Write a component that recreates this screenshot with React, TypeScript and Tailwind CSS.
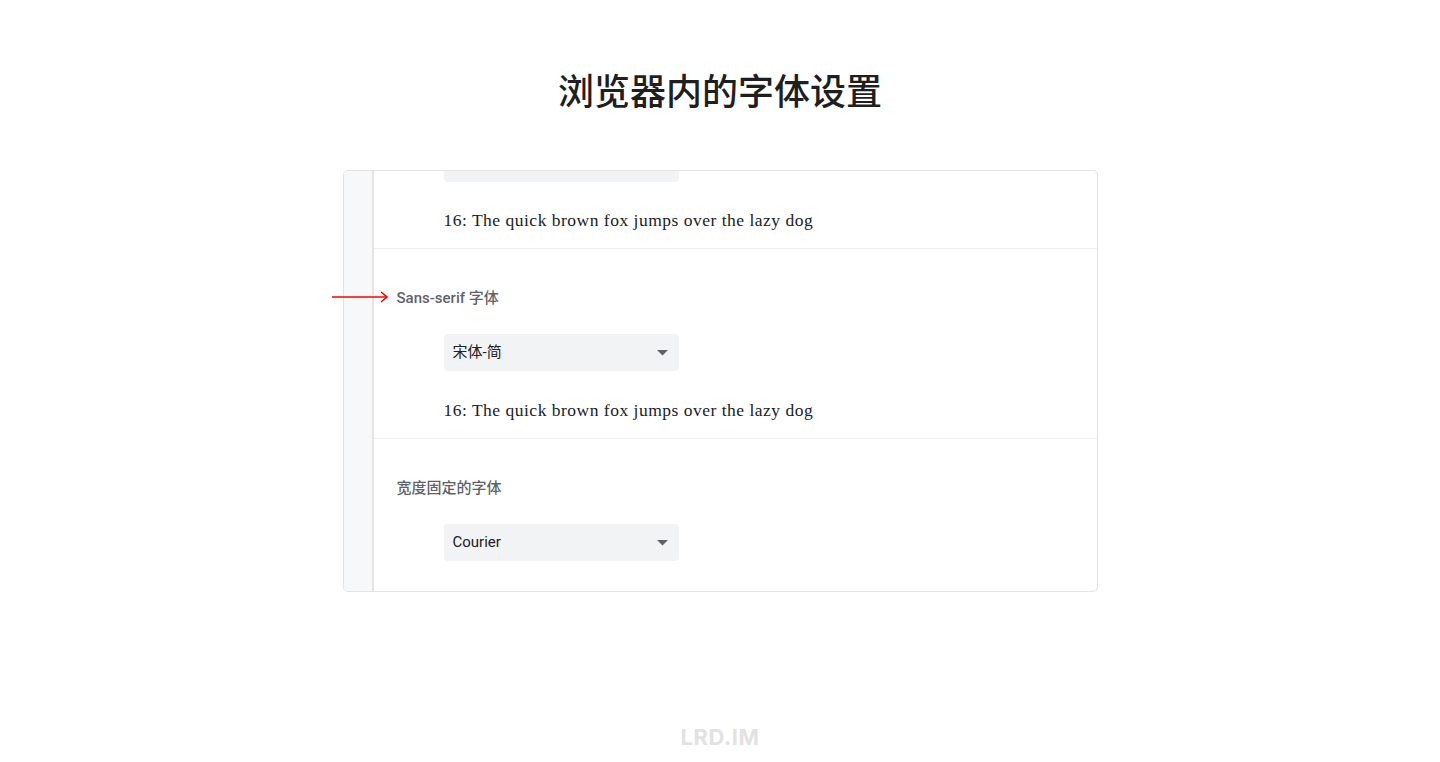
const UI_FONT = 'font-["Roboto","Noto_Sans_CJK_SC",sans-serif]'

const SampleLine = () => (
  <div className='pl-[70px] font-["Liberation_Serif","Noto_Sans_CJK_SC",serif] text-[17.5px] leading-[24px] tracking-[0.5px] text-[#202124]'>
    16: The quick brown fox jumps over the lazy dog
  </div>
)

const FontSelect = ({ value }: { value: string }) => (
  <div className="pl-[70px]">
    <div className="flex h-[37px] w-[235px] items-center justify-between rounded-[4px] bg-[#f1f3f4] pl-[9px] pr-[11px]">
      <span className={`${UI_FONT} text-[15px] text-[#202124]`}>{value}</span>
      <svg width="11" height="6" viewBox="0 0 11 6">
        <path d="M0 0 L11 0 L5.5 5.5 Z" fill="#5f6368" />
      </svg>
    </div>
  </div>
)

const Label = ({ text }: { text: string }) => (
  <div className={`pl-[23px] ${UI_FONT} text-[15px] font-medium leading-[20px] text-[#5f6368]`}>{text}</div>
)

export default function App() {
  return (
    <div className="flex min-h-[762px] w-full flex-col items-center bg-white">
      <h1 className='pt-[64px] font-["Noto_Sans_CJK_SC",sans-serif] text-[36px] font-medium leading-[50px] text-[#1f1f1f]'>
        浏览器内的字体设置
      </h1>

      <div className="relative mt-[56px] flex w-[755px] overflow-hidden rounded-[5px] border border-[#e3e3e3]">
        <div className="w-[30px] shrink-0 border-r-2 border-[#e4e4e4] bg-[#f7f8f9]" />
        <div className="flex-1">
          <div className="border-b border-[#efefef] pb-[16px]">
            <div className="pl-[70px]">
              <div className="h-[11px] w-[235px] rounded-b-[4px] bg-[#f1f3f4]" />
            </div>
            <div className="mt-[26px]">
              <SampleLine />
            </div>
          </div>

          <div className="border-b border-[#efefef] pb-[16px] pt-[39px]">
            <Label text="Sans-serif 字体" />
            <div className="mt-[26px]">
              <FontSelect value="宋体-简" />
            </div>
            <div className="mt-[27px]">
              <SampleLine />
            </div>
          </div>

          <div className="pb-[30px] pt-[39px]">
            <Label text="宽度固定的字体" />
            <div className="mt-[26px]">
              <FontSelect value="Courier" />
            </div>
          </div>
        </div>
      </div>

      <div className="pointer-events-none absolute left-[332px] top-[291px]">
        <svg width="57" height="12" viewBox="0 0 57 12">
          <path d="M0 6 H55" stroke="#ff0000" strokeWidth="1.6" />
          <path d="M49 1 L55 6 L49 11" stroke="#ff0000" strokeWidth="1.6" fill="none" />
        </svg>
      </div>

      <div className='mt-[130px] font-["Inter",sans-serif] text-[22px] font-bold leading-[30px] tracking-[0.5px] text-[#e2e2e2]'>
        LRD.IM
      </div>
    </div>
  )
}
